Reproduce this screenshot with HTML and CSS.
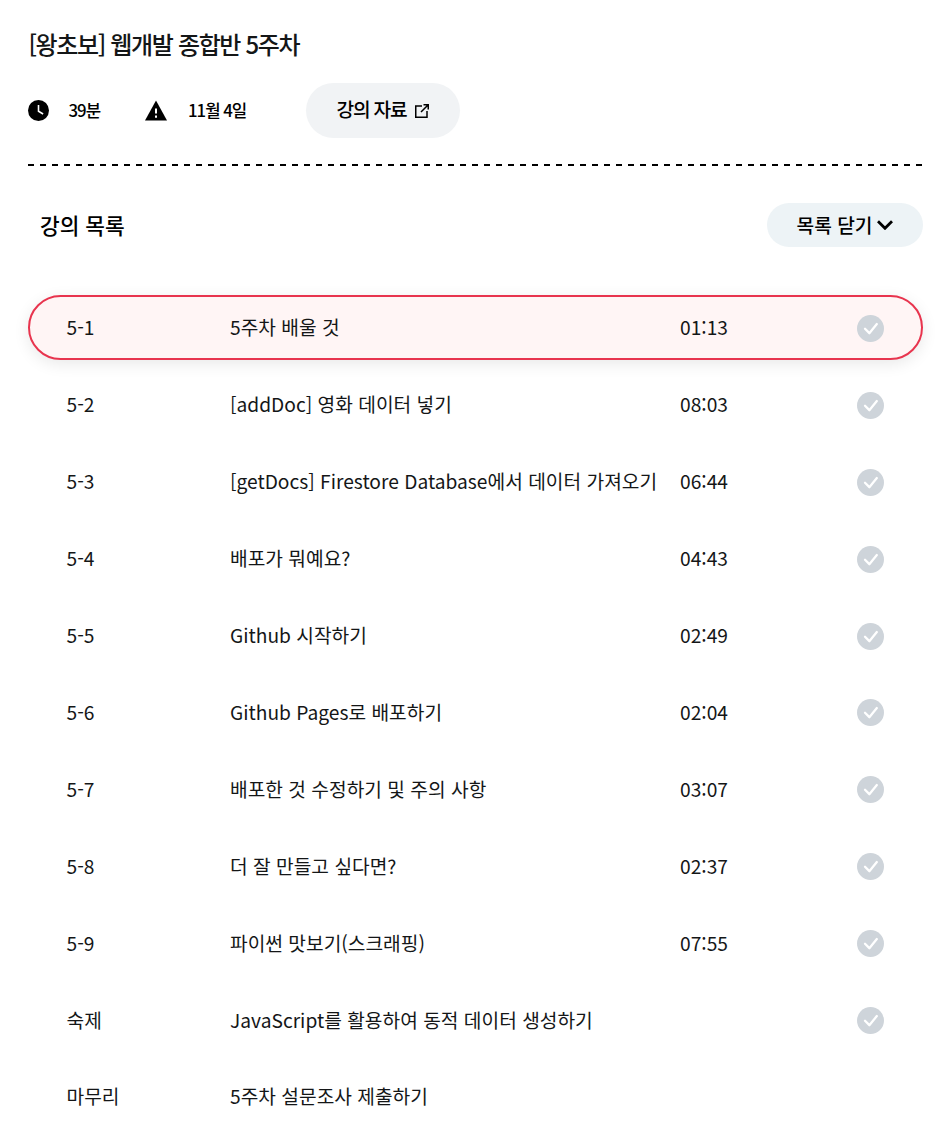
FILE: index.html
```html
<!DOCTYPE html>
<html lang="ko">
<head>
    <meta charset="UTF-8">
    <meta name="viewport" content="width=device-width, initial-scale=1.0">
    <title>[왕초보] 웹개발 종합반 5주차</title>
    <link rel="stylesheet" href="styles.css">
</head>
<body>
    <!-- shared check icon -->
    <svg class="sprite" aria-hidden="true">
        <symbol id="check" viewBox="0 0 26 26">
            <circle cx="13" cy="13" r="13" fill="#ced4da"/>
            <path d="M7.7 13.2l4.2 4.3 7.2-8.8" fill="none" stroke="#fff" stroke-width="2.2" stroke-linecap="round" stroke-linejoin="round"/>
        </symbol>
    </svg>

    <main class="container">
        <header class="week-header">
            <h1>[왕초보] 웹개발 종합반 5주차</h1>
            <div class="week-info">
                <svg class="info-icon" viewBox="0 0 20 20">
                    <circle cx="10" cy="10" r="10"/>
                    <path d="M10 4.8v5.9l4.4 2.6" fill="none" stroke="#fff" stroke-width="1.5"/>
                </svg>
                <span class="duration">39분</span>
                <svg class="info-icon warning" viewBox="0 0 22 20">
                    <path d="M11 0l11 20H0z"/>
                    <path d="M11 8v5M11 15v2.2" fill="none" stroke="#fff" stroke-width="2"/>
                </svg>
                <span class="due-date">11월 4일</span>
                <a class="material-btn" href="#">
                    <span>강의 자료</span>
                    <svg class="link-icon" viewBox="0 0 14 14" fill="none" stroke="#000" stroke-width="1.5">
                        <path d="M7 2H.75v11.25H12V7M8.5.75h4.75V5.5M13 1L6 8"/>
                    </svg>
                </a>
            </div>
        </header>

        <section class="lectures">
            <div class="list-header">
                <h2>강의 목록</h2>
                <button class="toggle-btn">
                    목록 닫기
                    <svg class="chevron" viewBox="0 0 16 10"><path d="M1 1.3l7 7 7-7" fill="none" stroke="#000" stroke-width="2.8"/></svg>
                </button>
            </div>

            <ul class="lecture-list">
                <li class="lecture active"><span>5-1</span><span>5주차 배울 것</span><span>01:13</span><svg class="check"><use href="#check"/></svg></li>
                <li class="lecture"><span>5-2</span><span>[addDoc] 영화 데이터 넣기</span><span>08:03</span><svg class="check"><use href="#check"/></svg></li>
                <li class="lecture"><span>5-3</span><span>[getDocs] Firestore Database에서 데이터 가져오기</span><span>06:44</span><svg class="check"><use href="#check"/></svg></li>
                <li class="lecture"><span>5-4</span><span>배포가 뭐예요?</span><span>04:43</span><svg class="check"><use href="#check"/></svg></li>
                <li class="lecture"><span>5-5</span><span>Github 시작하기</span><span>02:49</span><svg class="check"><use href="#check"/></svg></li>
                <li class="lecture"><span>5-6</span><span>Github Pages로 배포하기</span><span>02:04</span><svg class="check"><use href="#check"/></svg></li>
                <li class="lecture"><span>5-7</span><span>배포한 것 수정하기 및 주의 사항</span><span>03:07</span><svg class="check"><use href="#check"/></svg></li>
                <li class="lecture"><span>5-8</span><span>더 잘 만들고 싶다면?</span><span>02:37</span><svg class="check"><use href="#check"/></svg></li>
                <li class="lecture"><span>5-9</span><span>파이썬 맛보기(스크래핑)</span><span>07:55</span><svg class="check"><use href="#check"/></svg></li>
                <li class="lecture"><span>숙제</span><span>JavaScript를 활용하여 동적 데이터 생성하기</span><span></span><svg class="check"><use href="#check"/></svg></li>
                <li class="lecture"><span>마무리</span><span>5주차 설문조사 제출하기</span></li>
            </ul>
        </section>
    </main>
</body>
</html>
```
FILE: styles.css
```css
* { box-sizing: border-box; }
body {
    margin: 0;
    height: 1144px;
    overflow: hidden;
    background-color: #fff;
    color: #000;
    font-family: "Noto Sans CJK KR", sans-serif;
}
.sprite { display: none; }
.container { padding: 28px 29px 0 28px; }

/* week header */
h1 { margin: 0; padding-left: 0.4px; font-size: 24px; line-height: 32px; font-weight: 500; letter-spacing: -1.35px; color: #141617; }
.week-header {
    height: 138px;
    background: repeating-linear-gradient(to right, #000 0 6px, transparent 6px 12px) left bottom / 100% 2px no-repeat;
}
.week-info { display: flex; align-items: center; margin-top: 23px; font-size: 16.8px; font-weight: 500; letter-spacing: -1px; }
.week-info span { margin-top: -2px; }
.info-icon { flex: none; width: 21px; height: 21px; }
.duration { width: 96px; padding-left: 19.5px; }
.warning { width: 22px; }
.due-date { width: 139px; padding-left: 21px; }
.material-btn {
    display: flex;
    align-items: center;
    justify-content: center;
    gap: 9px;
    width: 154px;
    height: 55px;
    border-radius: 28px;
    background-color: #f1f3f5;
    color: #000;
    font-size: 19.2px;
    font-weight: 500;
    letter-spacing: -1.2px;
    text-decoration: none;
}
.week-info .material-btn span { margin-top: -4px; }
.link-icon { width: 14px; height: 14px; }

/* lecture list */
.list-header { display: flex; align-items: center; justify-content: space-between; margin-top: 37px; padding-left: 12px; }
h2 { margin: 0; font-size: 21.4px; line-height: 44px; font-weight: 500; }
.toggle-btn {
    display: flex;
    align-items: center;
    justify-content: center;
    gap: 5px;
    width: 156px;
    height: 44px;
    padding: 0;
    border: none;
    border-radius: 22px;
    background-color: #edf3f6;
    color: #000;
    font-family: inherit;
    font-size: 19.2px;
    font-weight: 500;
}
.chevron { width: 16px; height: 10px; }
.lecture-list { display: grid; gap: 12px; margin: 48px 0 0; padding: 0; list-style: none; }
.lecture {
    display: grid;
    grid-template-columns: 163.5px 450px 177px 27px;
    align-items: center;
    height: 64.92px;
    padding: 0 36px 0 36.5px;
    border: 2px solid transparent;
    border-radius: 33px;
    color: #141617;
    font-size: 19.2px;
    white-space: nowrap;
}
.lecture span { margin-top: -0.2px; }
.lecture.active { border-color: #e8344e; background-color: #fff5f5; box-shadow: 0 4px 16px rgba(0, 0, 0, 0.09); }
.check { width: 27px; height: 27px; margin-top: 2px; }
```
